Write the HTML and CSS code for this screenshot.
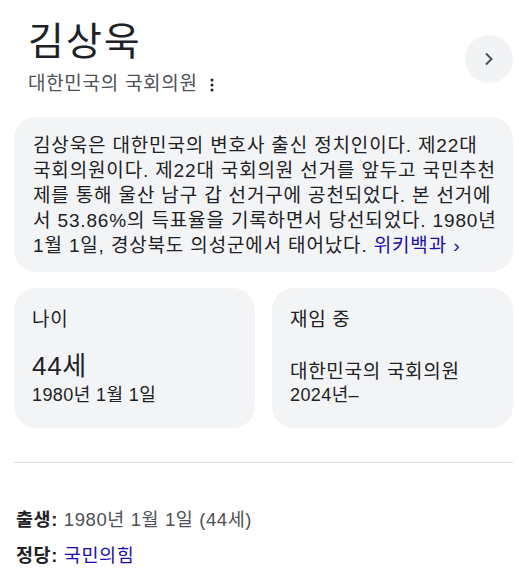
FILE: index.html
```html
<!DOCTYPE html>
<html lang="ko">
<head>
<meta charset="utf-8">
<link rel="stylesheet" href="styles.css">
</head>
<body>
<div class="panel">
  <div class="header">
    <div class="titles">
      <div class="title">김상욱</div>
      <div class="subtitle">대한민국의 국회의원<span class="kebab"><svg width="4" height="14" viewBox="0 0 4 14"><circle cx="2" cy="2" r="1.5"/><circle cx="2" cy="7" r="1.5"/><circle cx="2" cy="12" r="1.5"/></svg></span></div>
    </div>
    <div class="next"><svg width="10" height="14" viewBox="0 0 10 14"><path d="M2 1.5 L7.5 7 L2 12.5" fill="none" stroke="#4d5156" stroke-width="2"/></svg></div>
  </div>
  <div class="desc">김상욱은 대한민국의 변호사 출신 정치인이다. 제22대<br>국회의원이다. 제22대 국회의원 선거를 앞두고 국민추천<br>제를 통해 울산 남구 갑 선거구에 공천되었다. 본 선거에<br>서 53.86%의 득표율을 기록하면서 당선되었다. 1980년<br>1월 1일, 경상북도 의성군에서 태어났다. <a class="link">위키백과 ›</a></div>
  <div class="cards">
    <div class="card">
      <div class="label">나이</div>
      <div class="big">44세</div>
      <div class="sub">1980년 1월 1일</div>
    </div>
    <div class="card">
      <div class="label">재임 중</div>
      <div class="val">대한민국의 국회의원</div>
      <div class="sub sub-tight">2024년–</div>
    </div>
  </div>
  <hr class="divider">
  <div class="facts">
    <div class="fact"><b>출생:</b> 1980년 1월 1일 (44세)</div>
    <div class="fact"><b>정당:</b> <a class="link">국민의힘</a></div>
  </div>
</div>
</body>
</html>
```
FILE: styles.css
```css
html, body { margin: 0; padding: 0; background: #fff; }
body {
  font-family: "Liberation Sans", Arial, "Noto Sans CJK KR", sans-serif;
  color: #202124;
  letter-spacing: 0.7px;
}
.panel { padding: 0 6px 0 14px; }
.header { display: flex; justify-content: space-between; align-items: flex-start; padding: 19px 0 0 14px; }
.title { font-size: 39px; line-height: 46px; letter-spacing: 2px; color: #202124; }
.subtitle { font-size: 19px; line-height: 24px; color: #4d5156; margin-top: 7px; display: flex; align-items: center; }
.kebab { display: inline-flex; fill: #202124; margin-left: 12px; margin-top: 1px; }
.next { width: 48px; height: 48px; border-radius: 50%; background: #f1f3f4; display: flex; align-items: center; justify-content: center; margin-top: 16px; }
.desc { margin-top: 21px; background: #f3f4f6; border-radius: 22px; padding: 16px 6px 14px 19px; font-size: 19px; line-height: 25px; letter-spacing: 0.85px; color: #202124; white-space: nowrap; }
.link { color: #1a0dab; text-decoration: none; }
.cards { display: grid; grid-template-columns: 1fr 1fr; gap: 17px; margin-top: 16px; }
.card { background: #f3f4f6; border-radius: 22px; height: 140px; box-sizing: border-box; padding: 20px 12px 0 18px; }
.label { font-size: 19px; line-height: 24px; color: #202124; }
.big { font-size: 26px; line-height: 32px; margin-top: 18px; }
.val { font-size: 19px; line-height: 24px; margin-top: 28px; }
.sub { font-size: 18px; line-height: 24px; letter-spacing: 0.4px; margin-top: 1px; }
.sub-tight { margin-top: -1px; }
.divider { border: 0; border-top: 1px solid #dadce0; margin: 34px 0 0 0; }
.facts { padding: 45px 0 0 2px; }
.fact { font-size: 18.5px; line-height: 24px; letter-spacing: 0.6px; margin-bottom: 12px; color: #4d5156; }
.fact b { color: #202124; }
```
